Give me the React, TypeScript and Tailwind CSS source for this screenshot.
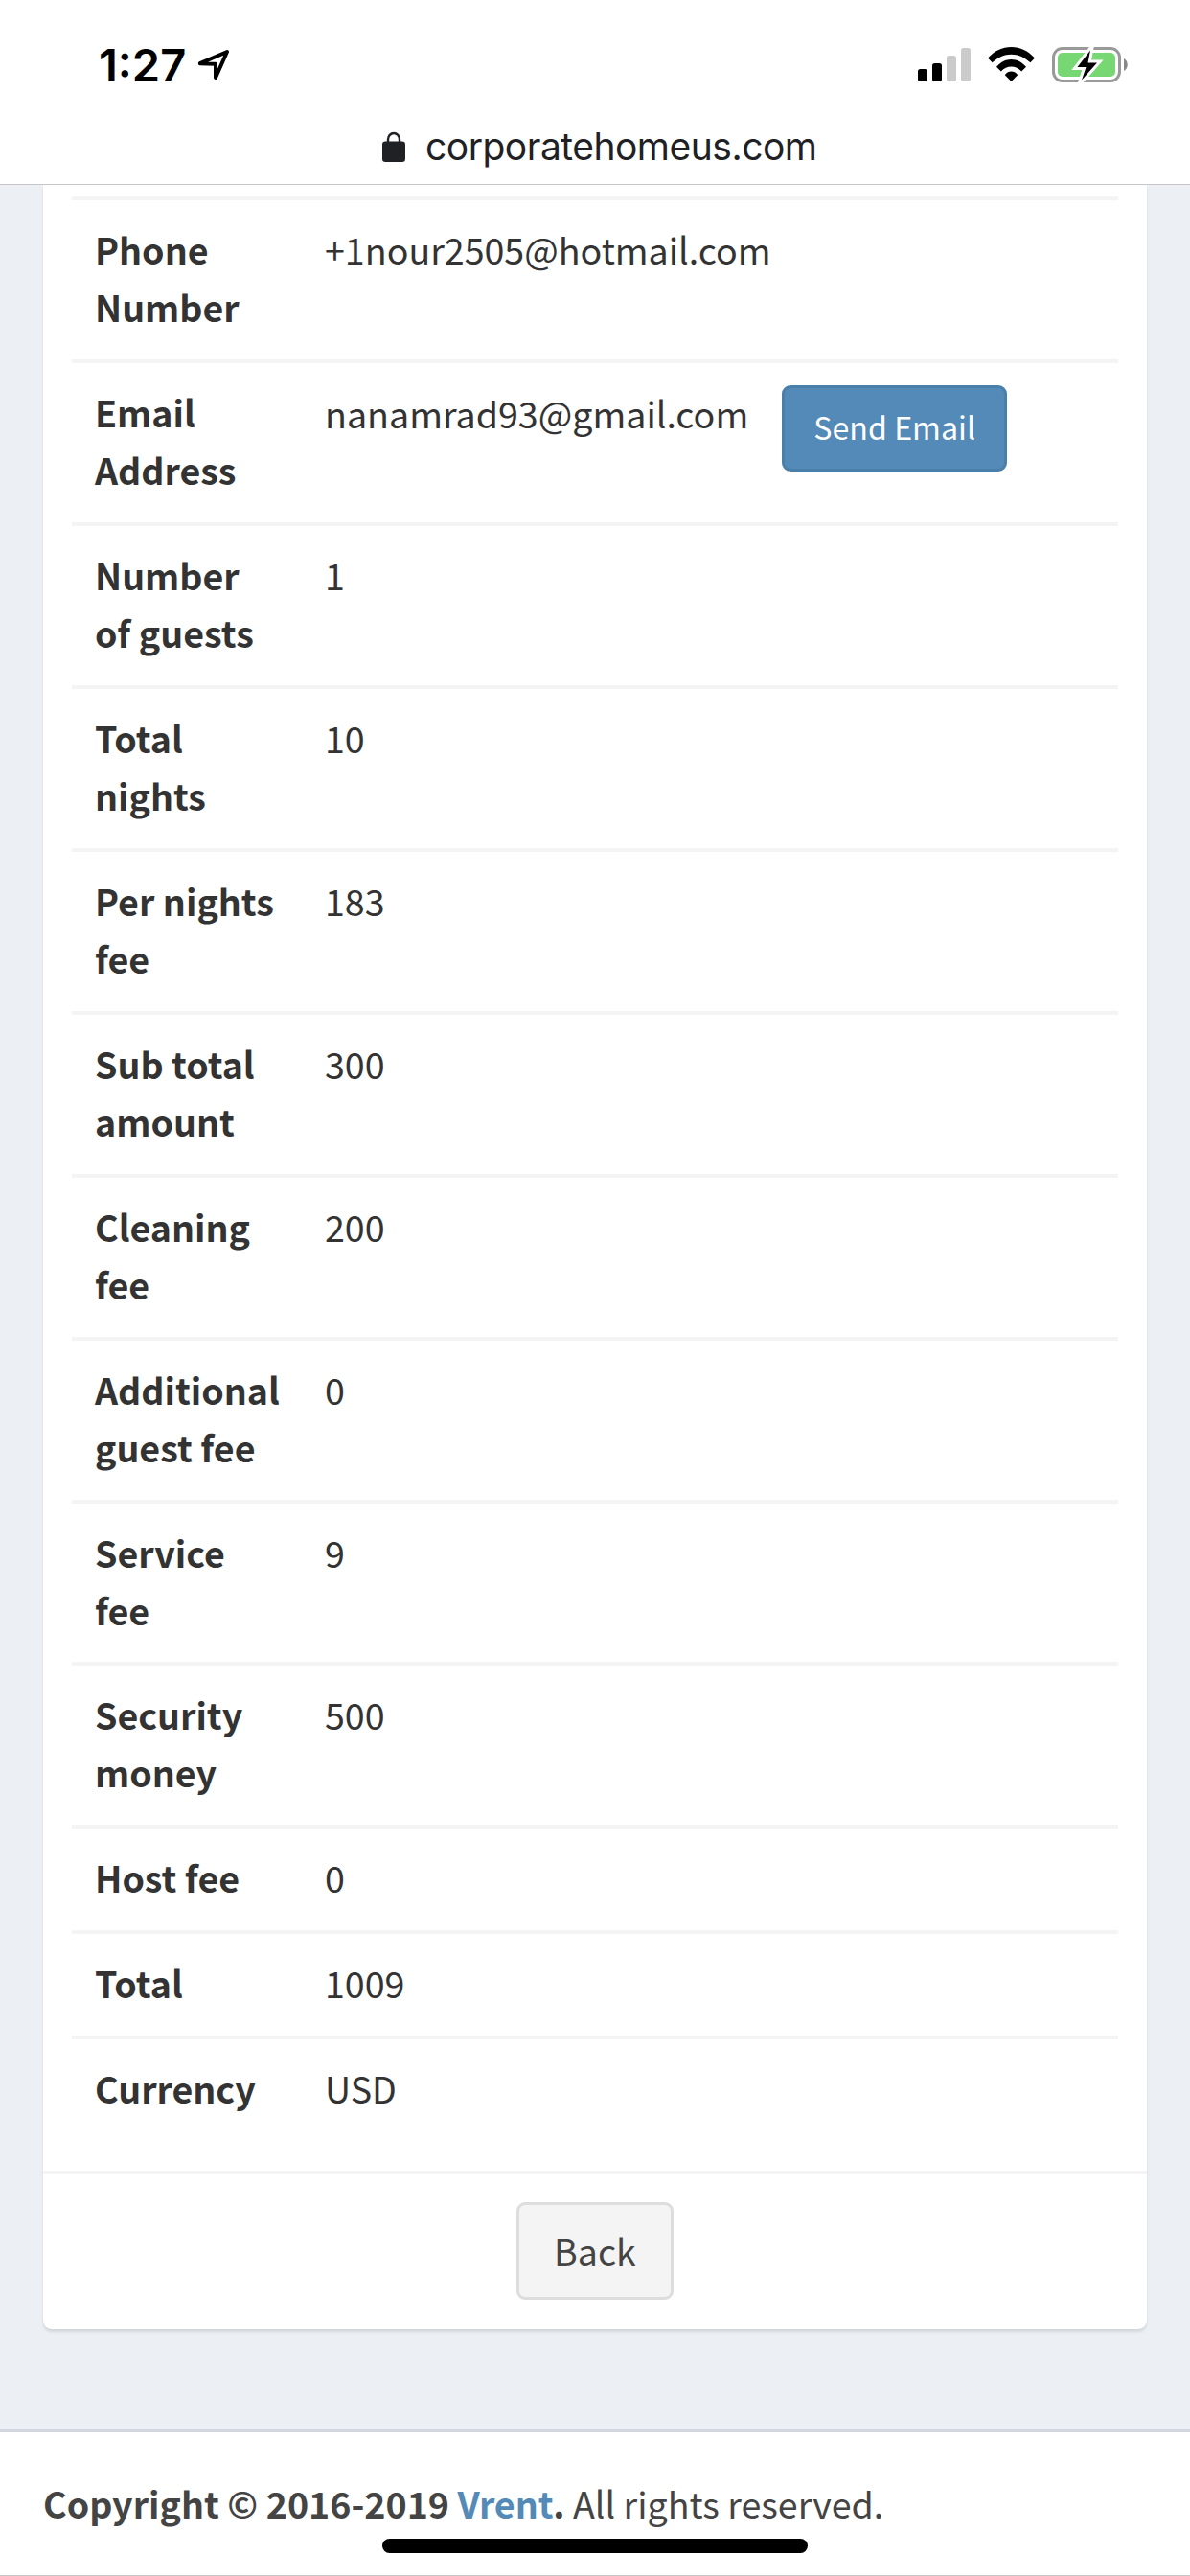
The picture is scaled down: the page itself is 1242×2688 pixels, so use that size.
import React from "react";

type Row = { label: string[]; value: string; action?: string; tight?: boolean };

const rows: Row[] = [
  { label: ["Phone", "Number"], value: "+1nour2505@hotmail.com" },
  { label: ["Email", "Address"], value: "nanamrad93@gmail.com", action: "Send Email" },
  { label: ["Number", "of guests"], value: "1" },
  { label: ["Total", "nights"], value: "10" },
  { label: ["Per nights", "fee"], value: "183" },
  { label: ["Sub total", "amount"], value: "300" },
  { label: ["Cleaning", "fee"], value: "200" },
  { label: ["Additional", "guest fee"], value: "0" },
  { label: ["Service", "fee"], value: "9", tight: true },
  { label: ["Security", "money"], value: "500" },
  { label: ["Host fee"], value: "0" },
  { label: ["Total"], value: "1009" },
  { label: ["Currency"], value: "USD" },
];

function StatusBar() {
  return (
    <div className="flex h-[132px] items-start justify-between pl-[103px] pr-[62px] font-['Inter',sans-serif]">
      <div className="flex items-start pt-[38px]">
        <span className="w-[99px] whitespace-nowrap text-[47px] font-semibold leading-[60px] text-black">1:27</span>
        <svg className="mt-[12px] ml-[3px]" width="36" height="36" viewBox="0 0 36 36" fill="none" stroke="#000" strokeWidth="4" strokeLinejoin="round">
          <path d="M3.800 16.200 32 4 20 31V16.800Z" />
        </svg>
      </div>
      <div className="flex items-start pt-[48px]">
        <svg width="57" height="38" viewBox="0 0 57 38">
          <rect x="0" y="24" width="10" height="13" rx="2.6" />
          <rect x="15" y="18" width="10" height="19" rx="2.6" />
          <rect x="30" y="10" width="10" height="27" rx="2.6" fill="#cbcbcb" />
          <rect x="45" y="2" width="10" height="35" rx="2.6" fill="#cbcbcb" />
        </svg>
        <svg className="ml-[15px]" width="52" height="38" viewBox="0 0 52 38">
          <path d="M1 12.6C8 5 16 1 25.5 1S43 5 50 12.6l-4.600 4.700C39.500 11.800 33 8.700 25.500 8.700S11.500 11.800 5.600 17.300Z" />
          <path d="M10 21.700C14.500 16.700 19.500 14 25.500 14S36.500 16.700 41 21.700l-4.800 4.700C33 23 29.500 21.400 25.500 21.400S18 23 14.800 26.400Z" />
          <path d="M18.800 30.200C20.800 27.600 23 26.600 25.500 26.600s4.700 1 6.700 3.600L25.500 37Z" />
        </svg>
        <svg className="ml-[16px]" width="82" height="40" viewBox="0 0 82 40">
          <rect x="1.500" y="2.500" width="69" height="34" rx="9.500" fill="none" stroke="#999" strokeWidth="3" />
          <rect x="6" y="7" width="60" height="25" rx="5" fill="#77d772" />
          <path d="M75 13c5 2.500 5 10.500 0 13Z" fill="#888" />
          <path d="M40 4.500 26.500 22h9l-4.500 13.500L47 17.500h-9.500Z" fill="#000" stroke="#fff" strokeWidth="6" strokeMiterlimit="10" paintOrder="stroke" />
        </svg>
      </div>
    </div>
  );
}

function AddressBar() {
  return (
    <div className="flex h-[61px] items-start border-b border-[#c6c6c8] pl-[399px]">
      <svg className="mt-[5px]" width="24" height="33" viewBox="0 0 24 33">
        <path d="M6 13V8.500a6 6.500 0 0 1 12 0V13" fill="none" stroke="#202124" strokeWidth="2.400" />
        <rect x="0" y="10.600" width="24" height="21.400" rx="3.200" fill="#202124" />
      </svg>
      <span className="ml-[21px] -mt-[7px] whitespace-nowrap font-['Inter',sans-serif] text-[39px] leading-[56px] tracking-[-0.5px] text-[#202124]">corporatehomeus.com</span>
    </div>
  );
}

function DetailRow({ label, value, action, tight }: Row) {
  return (
    <div className={`flex border-t-4 border-[#f4f4f4] px-6 pt-[21px] leading-[60px] text-[#333] ${tight ? "pb-[24px]" : "pb-[25px]"}`}>
      <div className="w-[240px] font-bold">
        {label.map((line) => (
          <div key={line} className="h-[60px] whitespace-nowrap">{line}</div>
        ))}
      </div>
      <div className="flex h-[60px] items-start whitespace-nowrap">
        <span className={action ? "mt-px" : ""}>{value}</span>
        {action && (
          <button className="ml-[35px] mt-[2px] h-[90px] w-[235px] shrink-0 rounded-[9px] border-[3px] border-[#497fa9] bg-[#538ab8] pb-[4px] text-[32.2px] leading-[54px] text-white">
            {action}
          </button>
        )}
      </div>
    </div>
  );
}

export default function App() {
  return (
    <div className="relative flex h-[2688px] w-[1242px] flex-col overflow-hidden bg-[#ecf0f5] font-['Noto_Sans_CJK_SC','Noto_Sans',sans-serif] text-[37.6px]">
      <header className="shrink-0 bg-white">
        <StatusBar />
        <AddressBar />
      </header>

      <main className="flex-1 px-[45px]">
        <section className="h-[2237px] rounded-b-[9px] bg-white shadow-[0_3px_3px_rgba(0,0,0,0.1)]">
          <div className="h-[2072px] px-[30px] pt-[12px]">
            {rows.map((row) => (
              <DetailRow key={row.label.join(" ")} {...row} />
            ))}
          </div>
          <div className="flex justify-center border-t-[3px] border-[#f4f4f4] pt-[30px]">
            <button className="h-[102px] w-[164px] rounded-[9px] border-[3px] border-[#ddd] bg-[#f4f4f4] pb-[3px] leading-[60px] text-[#444]">Back</button>
          </div>
        </section>
      </main>

      <footer className="h-[153px] shrink-0 border-t-[3px] border-b border-t-[#d2d6de] border-b-[#c6c6c8] bg-white px-[45px] pt-[44px] leading-[60px] text-[#444]">
        <div className="whitespace-nowrap">
          <strong className="font-bold">
            Copyright © 2016-2019 <a className="text-[#538ab8]">Vrent</a>.
          </strong>{" "}
          All rights reserved.
        </div>
      </footer>
      <div className="absolute bottom-[24px] left-[399px] h-[15px] w-[444px] rounded-full bg-black" />
    </div>
  );
}
